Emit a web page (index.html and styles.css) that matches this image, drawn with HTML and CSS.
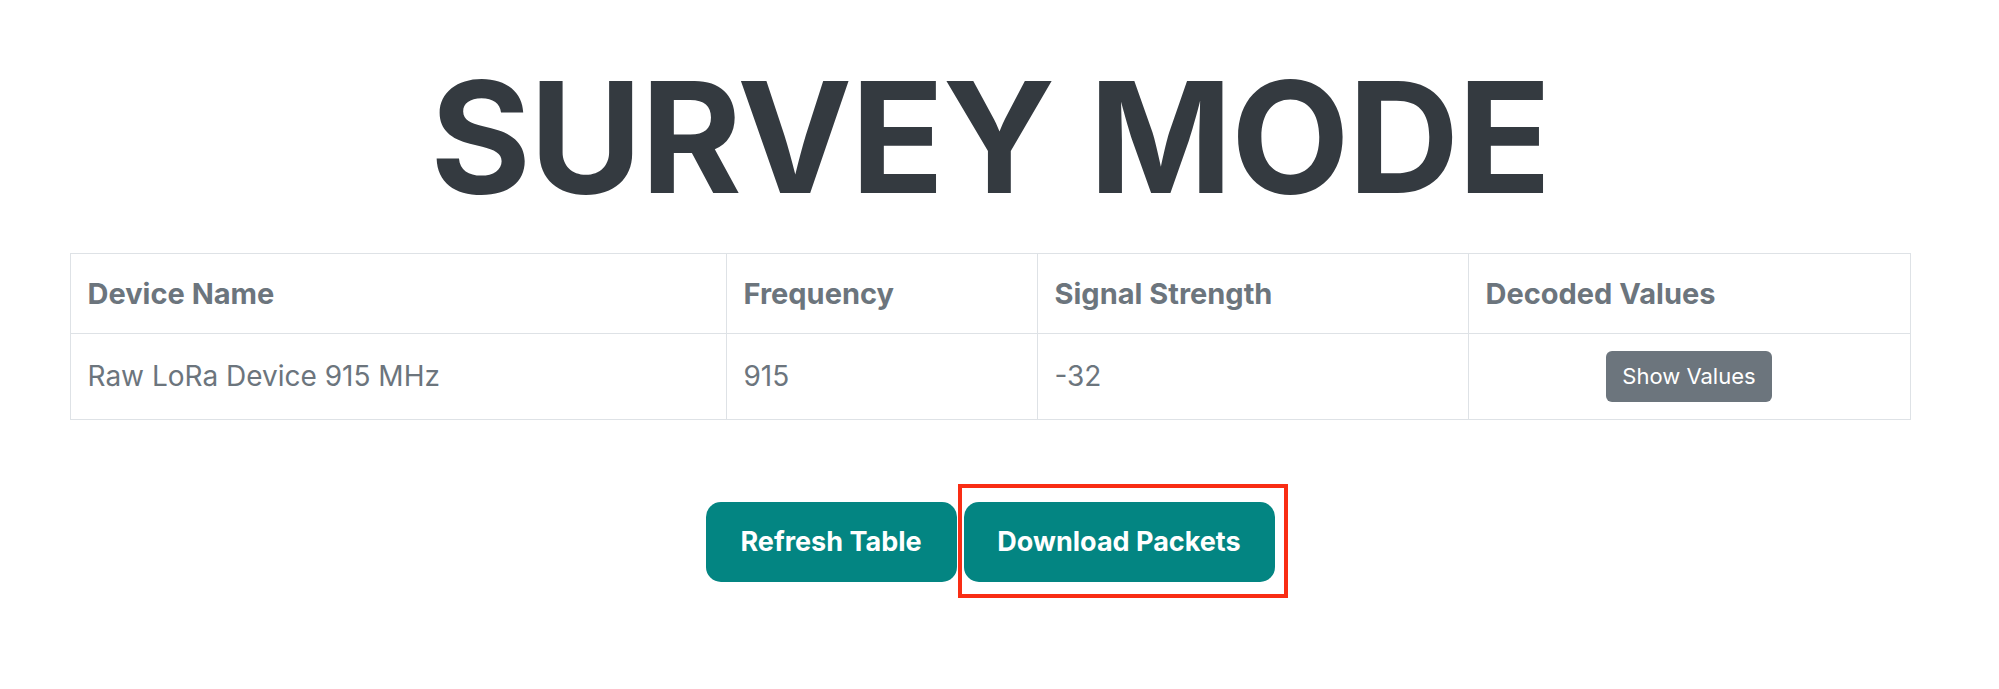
FILE: index.html
```html
<!DOCTYPE html>
<html lang="en">
<head>
<meta charset="utf-8">
<title>Survey Mode</title>
<link rel="stylesheet" href="styles.css">
</head>
<body>
<main class="page">
  <h1 class="title">SURVEY MODE</h1>
  <table class="survey">
    <colgroup>
      <col class="c1"><col class="c2"><col class="c3"><col class="c4">
    </colgroup>
    <thead>
      <tr>
        <th>Device Name</th>
        <th>Frequency</th>
        <th>Signal Strength</th>
        <th>Decoded Values</th>
      </tr>
    </thead>
    <tbody>
      <tr>
        <td>Raw LoRa Device 915 MHz</td>
        <td>915</td>
        <td>-32</td>
        <td class="center"><button class="btn-show">Show Values</button></td>
      </tr>
    </tbody>
  </table>
  <div class="actions">
    <button class="btn-main btn-refresh">Refresh Table</button>
    <div class="highlight">
      <button class="btn-main btn-download">Download Packets</button>
    </div>
  </div>
</main>
</body>
</html>
```
FILE: styles.css
```css
html, body {
  margin: 0;
  padding: 0;
  background: #ffffff;
}
body {
  font-family: Inter, "Liberation Sans", sans-serif;
}
.page {
  width: 1980px;
  padding-top: 45px;
  padding-bottom: 60px;
  display: flex;
  flex-direction: column;
  align-items: center;
}
.title {
  margin: 0;
  font-size: 154px;
  line-height: 1.2;
  font-weight: 700;
  color: #343a40;
  letter-spacing: -1.5px;
}
.survey {
  margin-top: 23px;
  width: 1840px;
  table-layout: fixed;
  border-collapse: collapse;
  color: #6c757d;
}
.c1 { width: 656px; }
.c2 { width: 311px; }
.c3 { width: 431px; }
.c4 { width: 442px; }
.survey th,
.survey td {
  border: 1px solid #dee2e6;
  padding: 0 17px;
  text-align: left;
  vertical-align: middle;
}
.survey th {
  height: 79px;
  font-size: 29px;
  font-weight: 700;
}
.survey td {
  height: 85px;
  font-size: 28px;
  font-weight: 400;
}
.survey td.center {
  text-align: center;
}
.btn-show {
  font-family: Inter, "Liberation Sans", sans-serif;
  font-size: 22px;
  color: #ffffff;
  background: #6c757d;
  border: none;
  border-radius: 6px;
  height: 51px;
  width: 166px;
  padding: 0;
  cursor: pointer;
}
.actions {
  margin-top: 82px;
  display: flex;
  gap: 7px;
  align-items: center;
}
.btn-main {
  display: block;
  font-family: Inter, "Liberation Sans", sans-serif;
  font-size: 27px;
  font-weight: 700;
  color: #ffffff;
  background: #038582;
  border: none;
  border-radius: 15px;
  height: 80px;
  padding: 0;
  cursor: pointer;
}
.btn-refresh { width: 251px; }
.btn-download { width: 311px; }
.highlight {
  border: 4px solid #f92d14;
  padding: 14px 9px 12px 2px;
  margin: -18px -13px -16px -6px;
}
```
